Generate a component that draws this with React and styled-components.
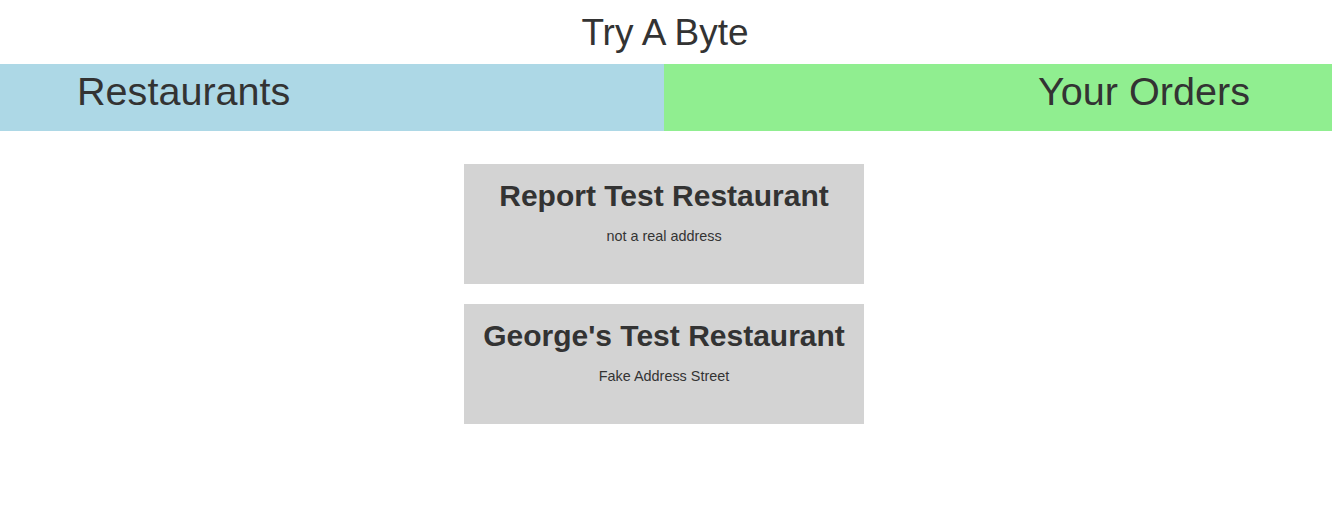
import React from "react";
import styled, { createGlobalStyle } from "styled-components";

const GlobalStyle = createGlobalStyle`
  html, body {
    margin: 0;
    padding: 0;
    background: #ffffff;
    font-family: "Liberation Sans", Arial, sans-serif;
    color: #333333;
  }
`;

const Page = styled.div`
  display: flex;
  flex-direction: column;
  width: 100%;
`;

const Header = styled.header`
  height: 64px;
  box-sizing: border-box;
  padding: 12px 2px 0 0;
  text-align: center;
`;

const Title = styled.h1`
  margin: 0;
  font-size: 37px;
  font-weight: 400;
  line-height: normal;
`;

const Nav = styled.nav`
  display: flex;
  height: 67px;
`;

const NavTab = styled.div`
  display: flex;
  align-items: flex-start;
  box-sizing: border-box;
  padding-top: 5px;
  width: ${(p) => p.$width};
  background: ${(p) => p.$bg};
  justify-content: ${(p) => (p.$align === "right" ? "flex-end" : "flex-start")};
  padding-left: ${(p) => (p.$align === "right" ? "0" : "77px")};
  padding-right: ${(p) => (p.$align === "right" ? "82px" : "0")};
`;

const NavLabel = styled.span`
  font-size: 39.6px;
  line-height: normal;
`;

const List = styled.main`
  display: flex;
  flex-direction: column;
  align-items: center;
  gap: 20px;
  padding: 33px 4px 0 0;
`;

const Card = styled.div`
  width: 400px;
  height: 120px;
  box-sizing: border-box;
  padding-top: 15px;
  background: #d3d3d3;
  text-align: center;
  display: flex;
  flex-direction: column;
  align-items: center;
  gap: 15px;
`;

const CardTitle = styled.h2`
  margin: 0;
  font-size: 30px;
  font-weight: 700;
  line-height: normal;
`;

const CardAddress = styled.p`
  margin: 0;
  font-size: 14.4px;
  line-height: normal;
`;

const restaurants = [
  { name: "Report Test Restaurant", address: "not a real address" },
  { name: "George's Test Restaurant", address: "Fake Address Street" },
];

export default function App() {
  return (
    <Page>
      <GlobalStyle />
      <Header>
        <Title>Try A Byte</Title>
      </Header>
      <Nav>
        <NavTab $width="664px" $bg="#add8e6" $align="left">
          <NavLabel>Restaurants</NavLabel>
        </NavTab>
        <NavTab $width="668px" $bg="#90ee90" $align="right">
          <NavLabel>Your Orders</NavLabel>
        </NavTab>
      </Nav>
      <List>
        {restaurants.map((r) => (
          <Card key={r.name}>
            <CardTitle>{r.name}</CardTitle>
            <CardAddress>{r.address}</CardAddress>
          </Card>
        ))}
      </List>
    </Page>
  );
}
